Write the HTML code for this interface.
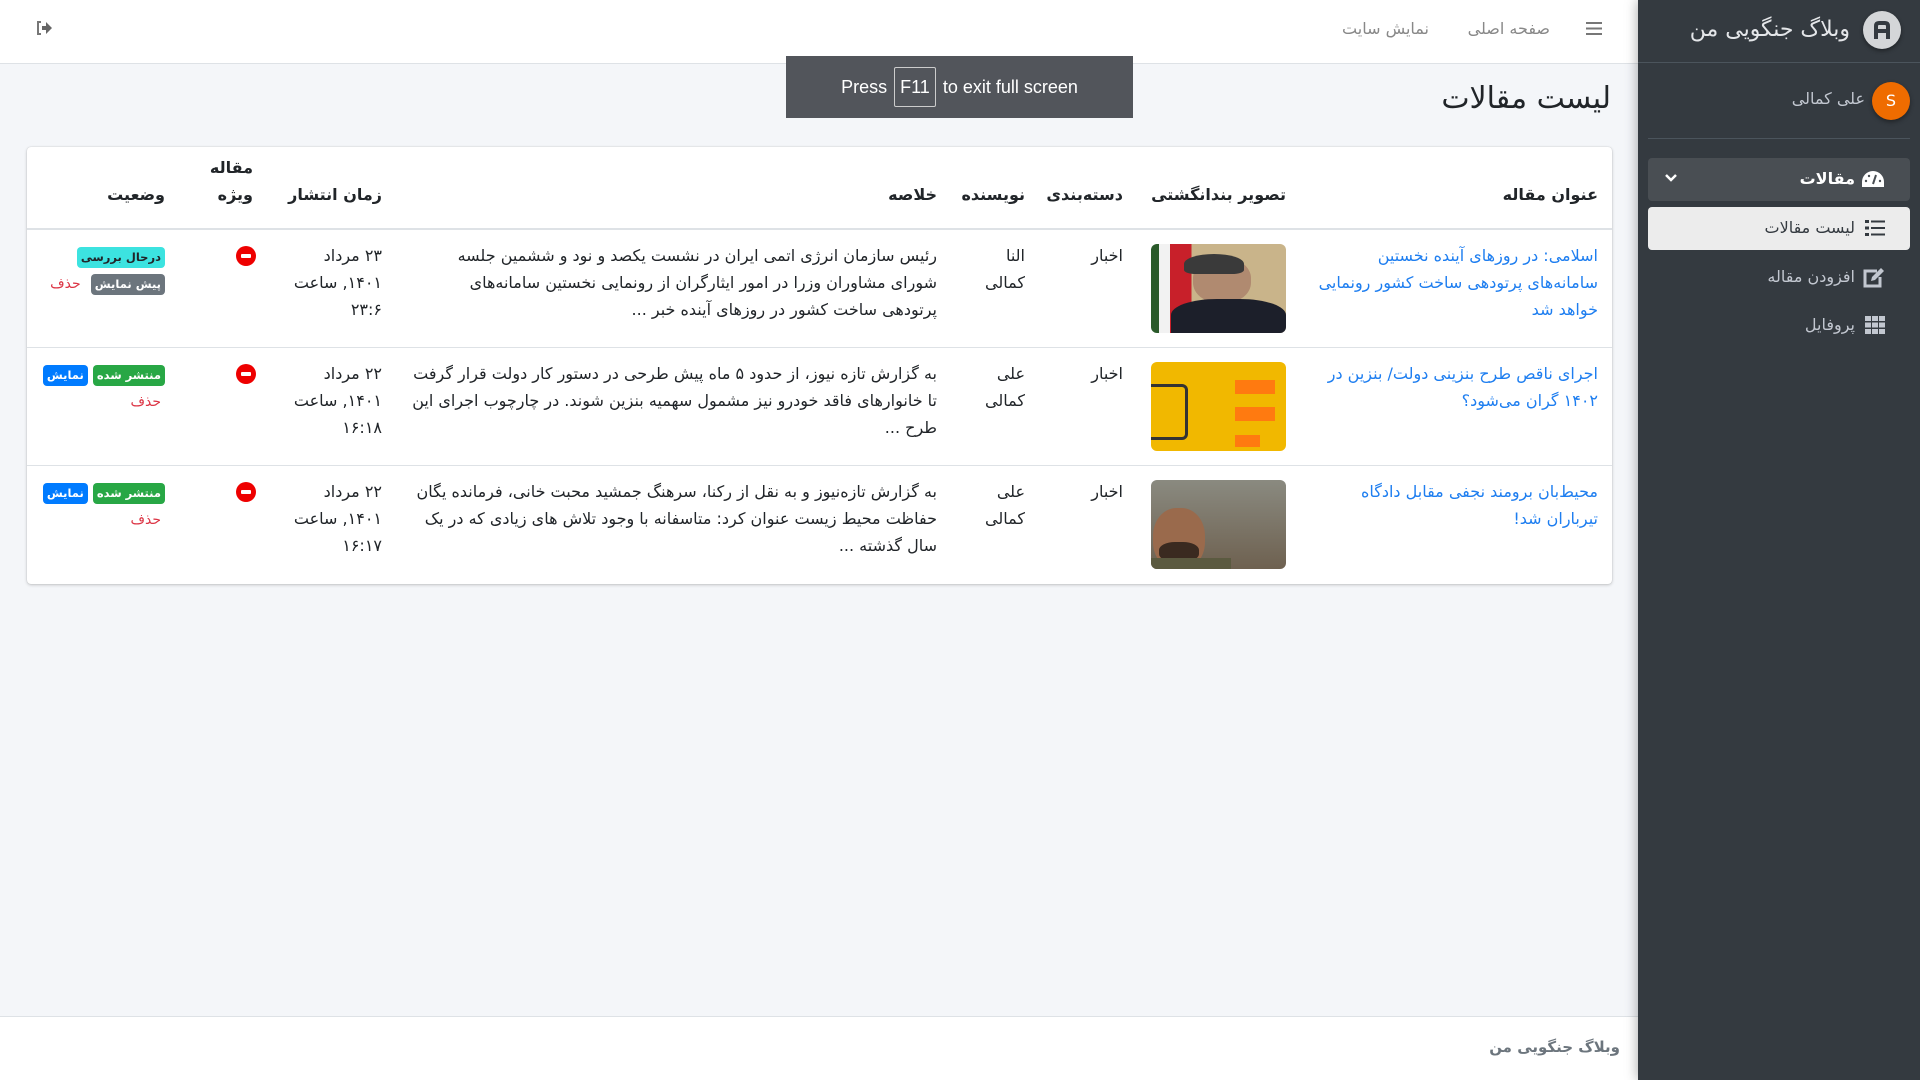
<!DOCTYPE html>
<html lang="fa" dir="rtl"><head><meta charset="utf-8"><style>
*{box-sizing:border-box;margin:0;padding:0}
body{width:1920px;height:1080px;overflow:hidden;background:#f4f6f9;font-family:"DejaVu Sans","Liberation Sans",sans-serif;color:#212529;position:relative;font-size:16px}
.nav{position:absolute;left:0;top:0;width:1638px;height:64px;background:#fff;border-bottom:1px solid #dee2e6}
.nav a{position:absolute;top:19px;color:#888;font-size:16px;text-decoration:none}
.side{position:absolute;right:0;top:0;width:282px;height:1080px;background:#343a40;box-shadow:0 0 12px rgba(0,0,0,.35)}
.brand{height:63px;border-bottom:1px solid #4b545c;position:relative}
.brand .logo{position:absolute;right:19px;top:11px;width:38px;height:38px;border-radius:50%;background:#d4d6d8;box-shadow:0 2px 4px rgba(0,0,0,.4)}
.brand span{position:absolute;right:70px;top:17px;color:#e4e6e9;font-size:22px}
.user{position:absolute;right:10px;top:63px;width:262px;height:76px;border-bottom:1px solid #4b545c}
.user .av{position:absolute;right:0;top:19px;width:38px;height:38px;border-radius:50%;background:#ef6c00;color:#fff;text-align:center;line-height:38px;font-size:16px;box-shadow:0 2px 5px rgba(0,0,0,.4)}
.user span{position:absolute;right:45px;top:26px;color:#c2c7d0;font-size:16px}
.mi{position:absolute;right:10px;width:262px;height:43px;border-radius:4px;font-size:16px;color:#c2c7d0}
.mi span{position:absolute;right:55px;top:11px}
.mi svg{position:absolute;right:25px;top:12px}
.title{position:absolute;right:309px;top:81px;font-size:30px;font-weight:normal}
.card{position:absolute;left:27px;top:147px;width:1585px;height:437px;background:#fff;border-radius:4px;box-shadow:0 0 1px rgba(0,0,0,.2),0 1px 3px rgba(0,0,0,.2)}
table{border-collapse:collapse;table-layout:fixed;width:1585px}
th{font-weight:bold;font-size:16px;text-align:right;vertical-align:bottom;padding:0 14px 20px;height:82px;border-bottom:2px solid #dee2e6;line-height:27px}
td{vertical-align:top;padding:12px 14px 0;line-height:27px;font-size:16px;border-top:1px solid #dee2e6;height:118px}
td:last-child{white-space:nowrap}
tr:nth-child(2) td{border-top:0}
td a{color:#1e7ef0;text-decoration:none}
.th{width:135px;height:89px;border-radius:6px;display:block;margin-top:2px;overflow:hidden;position:relative}
.b{display:inline-block;font-size:11.5px;font-weight:bold;padding:0 4px;border-radius:4px;line-height:21px;color:#fff}
.del{color:#dc3545;font-size:14px}
.min{display:inline-block;width:20px;height:20px;border-radius:50%;background:#e00;position:relative;margin-top:4px;margin-right:-3px}
.min:after{content:"";position:absolute;left:5px;right:5px;top:8px;height:4px;background:#fff;border-radius:1px}
.foot{position:absolute;left:0;top:1016px;width:1638px;height:64px;background:#fff;border-top:1px solid #dee2e6}
.foot span{position:absolute;right:18px;top:21px;font-weight:bold;color:#6c757d;font-size:15px}
.fs{position:absolute;left:786px;top:56px;width:347px;height:62px;background:#52555b;color:#fff;font-family:"Liberation Sans",sans-serif;font-size:18px;direction:ltr;text-align:center;line-height:62px}
.fs b{font-weight:normal;border:1px solid #ccc;border-radius:2px;padding:9px 5px;margin:0 7px}
</style></head><body>
<div class="nav">
<svg style="position:absolute;left:36px;top:21px" width="16" height="14" viewBox="0 0 16 14"><path d="M5 1H2v12h3" fill="none" stroke="#777" stroke-width="2"/><path d="M6 5h4V1l6 6-6 6V9H6z" fill="#666"/></svg>
<svg style="position:absolute;left:1586px;top:21px" width="16" height="15"><rect y="1" width="16" height="2" fill="#777"/><rect y="6.5" width="16" height="2" fill="#777"/><rect y="12" width="16" height="2" fill="#777"/></svg>
<a style="right:88px">صفحه اصلی</a><a style="right:209px">نمایش سایت</a>
</div>
<div class="title">لیست مقالات</div>
<div class="card"><table>
<colgroup><col style="width:312px"><col style="width:163px"><col style="width:98px"><col style="width:88px"><col style="width:555px"><col style="width:129px"><col style="width:88px"><col style="width:152px"></colgroup>
<tr><th>عنوان مقاله</th><th>تصویر بندانگشتی</th><th>دسته‌بندی</th><th>نویسنده</th><th>خلاصه</th><th>زمان انتشار</th><th>مقاله<br>ویژه</th><th>وضعیت</th></tr>
<tr><td><a>اسلامی: در روزهای آینده نخستین سامانه‌های پرتودهی ساخت کشور رونمایی خواهد شد</a></td>
<td><div class="th" style="background:linear-gradient(90deg,#2a5a2a 0 6%,#f2f2f2 6% 14%,#c8202a 14% 30%,#c9b48a 30%)"><div style="position:absolute;left:42px;top:14px;width:58px;height:45px;border-radius:45%;background:#b08a70"></div><div style="position:absolute;left:33px;top:10px;width:60px;height:20px;border-radius:50% 50% 20% 20%;background:#3a3a3a"></div><div style="position:absolute;left:20px;top:55px;width:115px;height:40px;border-radius:40% 40% 0 0;background:#1c1f2a"></div></div></td>
<td>اخبار</td><td>النا<br>کمالی</td><td>رئیس سازمان انرژی اتمی ایران در نشست یکصد و نود و ششمین جلسه شورای مشاوران وزرا در امور ایثارگران از رونمایی نخستین سامانه‌های پرتودهی ساخت کشور در روزهای آینده خبر ...</td>
<td>۲۳ مرداد<br>۱۴۰۱, ساعت<br>۲۳:۶</td><td><span class="min"></span></td>
<td><span class="b" style="background:#3ce3e0;color:#212529">درحال بررسی</span><br><span class="b" style="background:#6c757d">پیش نمایش</span> &nbsp;<span class="del">حذف</span></td></tr>
<tr><td><a>اجرای ناقص طرح بنزینی دولت/ بنزین در ۱۴۰۲ گران می‌شود؟</a></td>
<td><div class="th" style="background:#f1b800"><div style="position:absolute;left:0;top:22px;width:37px;height:56px;border:3px solid #333;border-left:0;border-radius:0 6px 6px 0"></div><div style="position:absolute;left:84px;top:18px;width:40px;height:14px;background:#ff7a10"></div><div style="position:absolute;left:84px;top:45px;width:40px;height:14px;background:#ff7a10"></div><div style="position:absolute;left:84px;top:73px;width:25px;height:12px;background:#ff7a10"></div></div></td>
<td>اخبار</td><td>علی<br>کمالی</td><td>به گزارش تازه نیوز، از حدود ۵ ماه پیش طرحی در دستور کار دولت قرار گرفت تا خانوارهای فاقد خودرو نیز مشمول سهمیه بنزین شوند. در چارچوب اجرای این طرح ...</td>
<td>۲۲ مرداد<br>۱۴۰۱, ساعت<br>۱۶:۱۸</td><td><span class="min"></span></td>
<td><span class="b" style="background:#28a745">منتشر شده</span> <span class="b" style="background:#007bff">نمایش</span><br><span class="del" style="margin-right:4px">حذف</span></td></tr>
<tr><td><a>محیط‌بان برومند نجفی مقابل دادگاه تیرباران شد!</a></td>
<td><div class="th" style="background:linear-gradient(180deg,#8a8a80,#6e6150)"><div style="position:absolute;left:2px;top:28px;width:52px;height:62px;border-radius:45%;background:#9a6a4c"></div><div style="position:absolute;left:8px;top:62px;width:40px;height:20px;border-radius:40%;background:#3a2a20"></div><div style="position:absolute;left:0;top:78px;width:80px;height:15px;background:#5b5a40"></div></div></td>
<td>اخبار</td><td>علی<br>کمالی</td><td>به گزارش تازه‌نیوز و به نقل از رکنا، سرهنگ جمشید محبت خانی، فرمانده یگان حفاظت محیط زیست عنوان کرد: متاسفانه با وجود تلاش های زیادی که در یک سال گذشته ...</td>
<td>۲۲ مرداد<br>۱۴۰۱, ساعت<br>۱۶:۱۷</td><td><span class="min"></span></td>
<td><span class="b" style="background:#28a745">منتشر شده</span> <span class="b" style="background:#007bff">نمایش</span><br><span class="del" style="margin-right:4px">حذف</span></td></tr>
</table></div>
<div class="fs">Press<b>F11</b>to exit full screen</div>
<div class="foot"><span>وبلاگ جنگویی من</span></div>
<div class="side">
<div class="brand"><div class="logo"><svg width="38" height="38" viewBox="0 0 38 38"><path d="M11 28V15q0-5 5-5h6q5 0 5 5v13h-4v-6h-8v6z M15 18h8v-3q0-1-1-1h-6q-1 0-1 1z" fill="#343a40" fill-rule="evenodd"/></svg></div><span>وبلاگ جنگویی من</span></div>
<div class="user"><div class="av">S</div><span>علی کمالی</span></div>
<div class="mi" style="top:158px;background:#494e53;color:#fff;font-weight:bold"><span>مقالات</span>
<svg width="24" height="18" viewBox="0 0 24 18"><path d="M12 1A11 11 0 0 0 1 12v5h22v-5A11 11 0 0 0 12 1z" fill="#fff"/><path d="M12 14l3-9" stroke="#494e53" stroke-width="2"/><circle cx="5" cy="11" r="1.2" fill="#494e53"/><circle cx="19" cy="11" r="1.2" fill="#494e53"/><circle cx="8" cy="6" r="1.2" fill="#494e53"/></svg>
<svg style="right:auto;left:17px;top:15px" width="12" height="9" viewBox="0 0 12 9"><path d="M1 2l5 5 5-5" fill="none" stroke="#fff" stroke-width="2.5"/></svg></div>
<div class="mi" style="top:207px;background:#ececec;color:#343a40"><span>لیست مقالات</span>
<svg width="20" height="18" viewBox="0 0 20 18"><g fill="#343a40"><rect x="0" y="1" width="4" height="3"/><rect x="0" y="7.5" width="4" height="3"/><rect x="0" y="14" width="4" height="3"/><rect x="6" y="1.5" width="14" height="2"/><rect x="6" y="8" width="14" height="2"/><rect x="6" y="14.5" width="14" height="2"/></g></svg></div>
<div class="mi" style="top:256px"><span>افزودن مقاله</span>
<svg width="22" height="20" viewBox="0 0 22 20"><path d="M14 3H2v15h15V9" fill="none" stroke="#c2c7d0" stroke-width="3"/><path d="M8 13l1-4 9-9 3 3-9 9z" fill="#c2c7d0"/></svg></div>
<div class="mi" style="top:304px"><span>پروفایل</span>
<svg width="20" height="18" viewBox="0 0 20 18"><g fill="#c2c7d0"><rect x="0" y="0" width="6" height="5"/><rect x="7" y="0" width="6" height="5"/><rect x="14" y="0" width="6" height="5"/><rect x="0" y="6.5" width="6" height="5"/><rect x="7" y="6.5" width="6" height="5"/><rect x="14" y="6.5" width="6" height="5"/><rect x="0" y="13" width="6" height="5"/><rect x="7" y="13" width="6" height="5"/><rect x="14" y="13" width="6" height="5"/></g></svg></div>
</div>
</body></html>
